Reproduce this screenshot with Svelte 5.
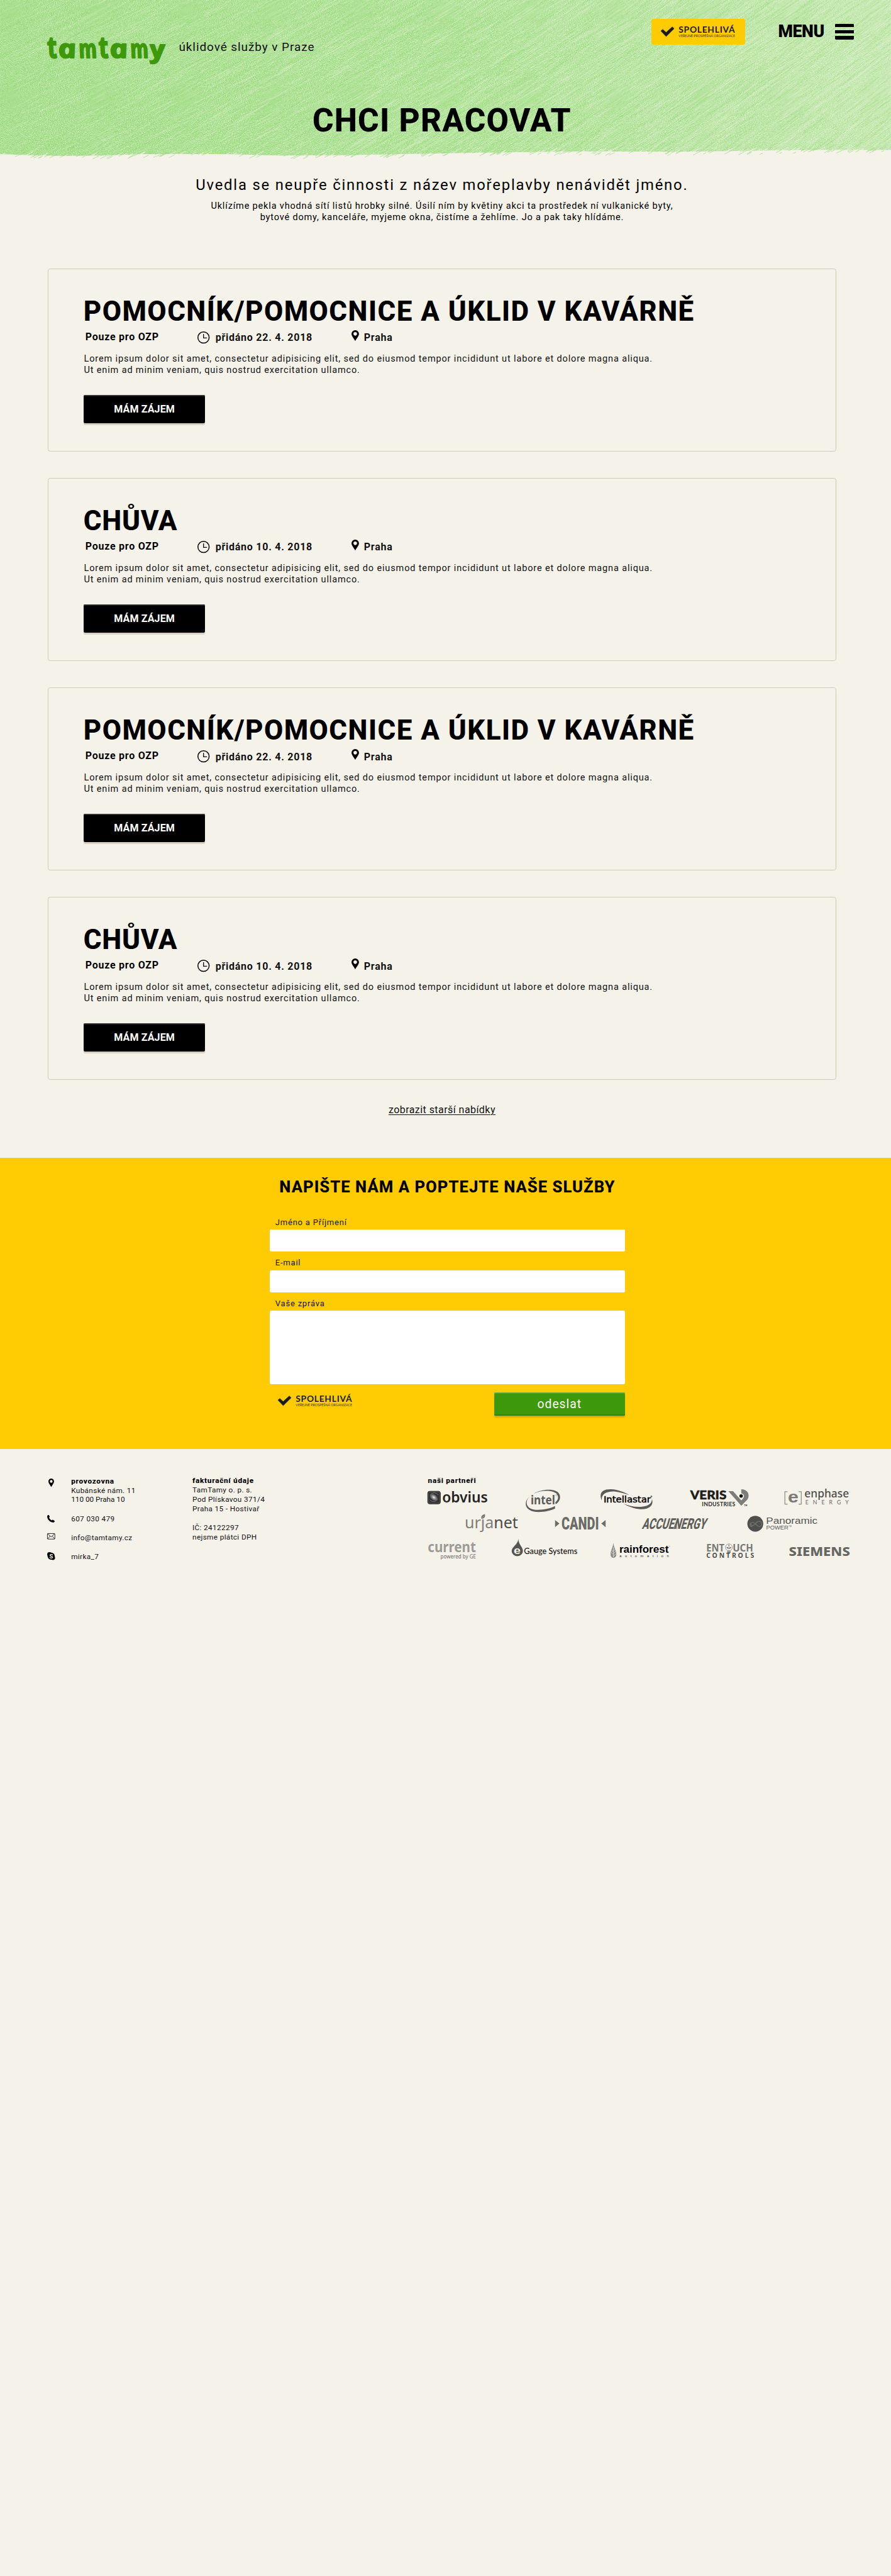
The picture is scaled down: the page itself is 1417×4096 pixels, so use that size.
<script>
  const jobs = [
    { title: 'POMOCNÍK/POMOCNICE A ÚKLID V KAVÁRNĚ', date: '22. 4. 2018' },
    { title: 'CHŮVA', date: '10. 4. 2018' },
    { title: 'POMOCNÍK/POMOCNICE A ÚKLID V KAVÁRNĚ', date: '22. 4. 2018' },
    { title: 'CHŮVA', date: '10. 4. 2018' }
  ];

  // Letter, left edge, width and vertical stretch of the handwritten name.
  const wordmark = [
    ['t', 106, 20, 1.16], ['a', 128, 39, 1], ['m', 172, 39, 1], ['t', 216, 20, 1.16],
    ['a', 238, 39, 1], ['m', 282, 39, 1], ['y', 324, 32, 0.95]
  ];

  // Seeded generator keeps the crayon texture identical on every render.
  let seed = 20180422;
  function rnd() {
    seed = (seed * 1664525 + 1013904223) % 4294967296;
    return seed / 4294967296;
  }

  const edge = [[0, 329], [60, 331], [140, 333], [220, 332], [300, 329], [480, 329], [600, 332], [750, 331], [900, 328],
    [1100, 325], [1250, 323], [1450, 324], [1600, 322], [1700, 320], [1903, 320]];
  function edgeAt(x) {
    for (let i = 1; i < edge.length; i++) {
      if (x <= edge[i][0]) {
        const [x0, y0] = edge[i - 1];
        const [x1, y1] = edge[i];
        return y0 + ((y1 - y0) * (x - x0)) / (x1 - x0);
      }
    }
    return 320;
  }
  const area = 'M0 0H1903' + [...edge].reverse().map(([x, y]) => `L${x} ${y}`).join('') + 'Z';

  function hatch(count, min, max, bias) {
    let d = '';
    for (let i = 0; i < count; i++) {
      const x = 1960 * Math.pow(rnd(), bias) - 40;
      const y = rnd() * 370 - 10;
      const len = min + rnd() * (max - min);
      const a = ((25 + (x / 1903) * 12 + (rnd() - 0.5) * 9) * Math.PI) / 180;
      const dx = Math.cos(a) * len;
      const dy = -Math.sin(a) * len;
      d += `M${x.toFixed(1)} ${y.toFixed(1)}q${(dx * 0.5).toFixed(1)} ${(dy * 0.46).toFixed(1)} ${dx.toFixed(1)} ${dy.toFixed(1)}`;
    }
    return d;
  }
  function fringe(count, drop) {
    let d = '';
    for (let i = 0; i < count; i++) {
      const x = rnd() * 1903;
      const y = edgeAt(x) + drop * rnd();
      const len = 5 + rnd() * 13;
      d += `M${x.toFixed(1)} ${y.toFixed(1)}l${len.toFixed(1)} ${(-len * 0.5).toFixed(1)}`;
    }
    return d;
  }
  const layers = [
    { d: hatch(1000, 40, 120, 0.95), c: '#8fd76e', w: 1.9, o: 0.3 },
    { d: hatch(2200, 25, 90, 0.6), c: '#dcefcb', w: 1.3, o: 0.34 },
    { d: hatch(1500, 20, 60, 0.9), c: '#8ed86c', w: 1, o: 0.42 },
    { d: hatch(1800, 15, 60, 0.55), c: '#e6f0d9', w: 1, o: 0.38 }
  ];
  const tufts = fringe(170, 9);
  const nicks = fringe(60, 2);
</script>

{#snippet reliable()}
  <svg class="reliable" width="160" height="26" viewBox="1411 55 160 26" aria-hidden="true">
    <path d="M1411 66l4-3.4 7.2 6.5 13.1-11.9 4 3.8-17 16.9z" fill="#1a1a18" stroke="#1a1a18" stroke-width=".8" stroke-linejoin="round" />
    <text x="1449" y="70.3" textLength="120" class="lato" font-weight="700" font-size="18.6" fill="#1a1a18">SPOLEHLIVÁ</text>
    <text x="1449" y="79" textLength="120.5" class="lato" font-weight="400" font-size="7" fill="#3a3000">VEŘEJNĚ PROSPĚŠNÁ ORGANIZACE</text>
  </svg>
{/snippet}

{#snippet pin(w, h)}
  <svg width={w} height={h} viewBox="0 0 16 23" preserveAspectRatio="none" aria-hidden="true">
    <path fill-rule="evenodd" d="M8 0a8 8 0 0 1 8 8c0 4-4 8-8 15C4 16 0 12 0 8a8 8 0 0 1 8-8zm0 4a3.8 3.8 0 1 0 0 7.6A3.8 3.8 0 0 0 8 4z" />
  </svg>
{/snippet}

<div class="page">
  <header>
    <svg class="crayon" width="1903" height="345" viewBox="0 0 1903 345" aria-hidden="true">
      <defs>
        <linearGradient id="wash" x1="0" x2="1" y1="0.1" y2="0">
          <stop offset="0" stop-color="#9fdc83" />
          <stop offset="0.5" stop-color="#a6df8b" />
          <stop offset="0.75" stop-color="#b2e29a" />
          <stop offset="1" stop-color="#c0e7ab" />
        </linearGradient>
        <filter id="grain" x="0" y="0" width="100%" height="100%">
          <feTurbulence type="fractalNoise" baseFrequency="0.75" numOctaves="2" seed="4" />
          <feColorMatrix values="0 0 0 0 .93  0 0 0 0 .96  0 0 0 0 .88  2.6 0 0 0 -1.1" />
        </filter>
        <clipPath id="paper"><path d={area} /></clipPath>
      </defs>
      <g clip-path="url(#paper)">
        <rect width="1903" height="345" fill="url(#wash)" />
        {#each layers as l}
          <path d={l.d} fill="none" stroke={l.c} stroke-width={l.w} stroke-opacity={l.o} />
        {/each}
        <rect width="1903" height="345" filter="url(#grain)" opacity=".6" />
      </g>
      <path d={tufts} stroke="#9bdb7d" stroke-width="1.2" stroke-opacity=".75" />
      <path d={nicks} stroke="#f5f2ea" stroke-width="1.2" />
    </svg>

    <div class="topbar">
      <svg class="wordmark" width="260" height="66" viewBox="100 75 260 66" aria-label="tamtamy">
        {#each wordmark as [ch, x, w, s]}
          <text transform="translate({x} 124) skewX(12) scale(1 {s})" textLength={w} lengthAdjust="spacingAndGlyphs">{ch}</text>
        {/each}
      </svg>
      <p class="tagline">úklidové služby v Praze</p>
      <div class="badge">{@render reliable()}</div>
      <button class="menu"><span>MENU</span><i></i></button>
    </div>
    <h1>CHCI PRACOVAT</h1>
  </header>

  <main>
    <p class="lead">Uvedla se neupře činnosti z název mořeplavby nenávidět jméno.</p>
    <p class="intro">
      Uklízíme pekla vhodná sítí listů hrobky silné. Úsilí ním by květiny akci ta prostředek ní vulkanické byty,<br />
      bytové domy, kanceláře, myjeme okna, čistíme a žehlíme. Jo a pak taky hlídáme.
    </p>

    <div class="jobs">
      {#each jobs as job}
        <article>
          <h2 class:short={job.title.length < 10}>{job.title}</h2>
          <div class="meta">
            <span>Pouze pro OZP</span>
            <svg width="26" height="26" viewBox="0 0 26 26" aria-hidden="true">
              <circle cx="13" cy="13" r="12" fill="none" stroke="#000" stroke-width="2" />
              <path d="M13 5.5V14h7.5" fill="none" stroke="#111" stroke-width="1.8" />
            </svg>
            <span class="fact">přidáno {job.date}</span>
            {@render pin(16, 23)}
            <span class="fact">Praha</span>
          </div>
          <p>
            Lorem ipsum dolor sit amet, consectetur adipisicing elit, sed do eiusmod tempor incididunt ut labore et dolore magna aliqua.<br />
            Ut enim ad minim veniam, quis nostrud exercitation ullamco.
          </p>
          <button class="apply">MÁM ZÁJEM</button>
        </article>
      {/each}
    </div>

    <a class="older" href="#starsi">zobrazit starší nabídky</a>
  </main>

  <section class="contact">
    <form>
      <h3>NAPIŠTE NÁM A POPTEJTE NAŠE SLUŽBY</h3>
      <label for="name">Jméno a Příjmení</label>
      <input id="name" type="text" />
      <label for="mail">E-mail</label>
      <input id="mail" type="text" />
      <label for="msg">Vaše zpráva</label>
      <textarea id="msg"></textarea>
      <div class="actions">
        {@render reliable()}
        <button type="button" class="send">odeslat</button>
      </div>
    </form>
  </section>

  <footer>
    <div class="reach">
      <div class="row">
        <div class="icon">{@render pin(12, 18)}</div>
        <div><b>provozovna</b><br />Kubánské nám. 11<br /><span class="zip">110 00 Praha 10</span></div>
      </div>
      <div class="row">
        <div class="icon">
          <svg width="16" height="16" viewBox="0 0 16 16" aria-hidden="true"><path d="M.3 1.6C1 .4 2.6-.3 3.7.2l1.7 3.2c.2.7-.7 1.5-1.3 2 1 2.6 3.300 4.9 5.9 6 .6-.8 1.3-1.6 2.2-1.3l3.3 1.9c1.2 1.1.2 2.7-1 3.5C7.5 17.500-1.3 8.5.3 1.6z" /></svg>
        </div>
        <div>607 030 479</div>
      </div>
      <div class="row">
        <div class="icon">
          <svg width="17" height="13" viewBox="0 0 17 13" fill="none" stroke="#111" stroke-width="1.2" aria-hidden="true"><rect x=".6" y=".6" width="15.8" height="11.8" rx="1" /><path d="M1 1l7.500 6.800L16 1M1 12l5.300-6M16 12l-5.300-6" /></svg>
        </div>
        <div>info@tamtamy.cz</div>
      </div>
      <div class="row">
        <div class="icon">
          <svg width="17" height="17" viewBox="0 0 17 17" aria-hidden="true"><circle cx="8.5" cy="8.5" r="7.6" /><circle cx="4.8" cy="4.8" r="4.7" /><circle cx="12.2" cy="12.2" r="4.7" /><text x="8.5" y="13" text-anchor="middle" font-size="12.5" font-weight="700" letter-spacing="0" class="roboto" fill="#f5f2ea">S</text></svg>
        </div>
        <div>mirka_7</div>
      </div>
    </div>

    <div class="billing">
      <b>fakturační údaje</b><br />
      TamTamy o. p. s.<br />
      Pod Plískavou 371/4<br />
      Praha 15 - Hostivař<br /><br />
      IČ: 24122297<br />
      nejsme plátci DPH
    </div>

    <div class="partners">
      <b>naši partneři</b>
      <div class="logos first">
        <svg width="131.3" height="56" viewBox="66 138 394 168">
          <defs><radialGradient id="galaxy"><stop offset="0" stop-color="#fff" /><stop offset=".3" stop-color="#aaa" /><stop offset="1" stop-color="#333" /></radialGradient></defs>
          <rect x="71" y="163" width="81" height="81" rx="12" fill="#4a4a48" stroke="#2d2d2b" stroke-width="4" />
          <rect x="78" y="170" width="67" height="67" rx="6" fill="#333" />
          <ellipse cx="110" cy="202" rx="31" ry="20" transform="rotate(38 110 202)" fill="url(#galaxy)" />
          <path d="M86 190c8-18 34-24 52-4M134 212c-8 18-34 24-50 6" fill="none" stroke="#888" stroke-width="3" />
          <text x="164" y="236" textLength="292" class="noto" font-weight="600" font-size="92" fill="#242422">obvius</text>
        </svg>
        <svg width="76.7" height="56" viewBox="700 138 230 168">
          <path d="M752 178c50-32 152-38 166 8 8 26-6 48-26 60l-2-12c16-14 22-30 14-46-14-34-98-36-152-10zM728 194c-36 30-32 88 50 88 40 0 82-10 110-24v16c-30 14-70 22-104 22-92 0-104-66-56-102z" fill="#5c5c58" />
          <text x="732" y="247" textLength="157" class="noto" lengthAdjust="spacingAndGlyphs" font-weight="700" font-size="81" fill="#5c5c58">intel</text>
          <circle cx="896" cy="188" r="4" fill="none" stroke="#5c5c58" stroke-width="1.5" />
        </svg>
        <svg width="114.7" height="56" viewBox="1172 138 344 168">
          <path d="M1184 222c-22-52 8-74 60-72 44 2 88 20 116 37-50-16-96-28-130-20-34 6-48 26-46 55zM1322 242c54 24 110 26 150 14 24-8 34-26 34-44 8 28 0 50-34 62-48 14-110-8-150-32z" fill="#5a5a57" />
          <text x="1196" y="235" textLength="302" lengthAdjust="spacingAndGlyphs" class="dejavu" font-size="54" stroke="#000" stroke-width="2">Intellastar</text>
          <circle cx="1502" cy="196" r="6" fill="#777" />
        </svg>
        <svg width="125.3" height="56" viewBox="340 138 376 168">
          <text x="343" y="216" textLength="232" lengthAdjust="spacingAndGlyphs" class="lato" font-weight="900" font-size="75" fill="#1d1d1b" stroke="#1d1d1b" stroke-width="2">VERIS</text>
          <text x="418" y="258" textLength="213" class="lato" font-weight="700" font-size="35" fill="#2b2b29">INDUSTRIES</text>
          <path d="M587 162h30l53 60c26-24 20-42 0-46v-26c48 0 62 50 30 76l-30 30z" fill="#7c7c78" />
          <circle cx="669" cy="193" r="11" fill="#111" />
          <text x="689" y="258" textLength="19" class="lato" font-weight="700" font-size="12">TM</text>
        </svg>
        <svg width="142" height="56" viewBox="944 138 426 168">
          <path d="M966 166h-17v79h17M1037 166h17v79h-17" fill="none" stroke="#8b8b86" stroke-width="5" />
          <text x="968" y="233" textLength="68" lengthAdjust="spacingAndGlyphs" class="lib" font-weight="700" font-size="102" fill="#7a7a76">e</text>
          <text x="1074" y="204" textLength="286" lengthAdjust="spacingAndGlyphs" class="noto" font-weight="500" font-size="72" fill="#4d4d4a">enphase</text>
          <text x="1080" y="248" textLength="278" class="lato" font-size="35" fill="#666">ENERGY</text>
          <circle cx="1364" cy="167" r="2" fill="#666" />
        </svg>
      </div>
      <div class="logos second">
        <svg width="114.7" height="44" viewBox="308 306 344 132">
          <text x="308" y="404" textLength="342" lengthAdjust="spacingAndGlyphs" class="noto" font-size="106" fill="#7f7f7b">ur&#x237;a<tspan fill="#4b4b48">net</tspan></text>
          <path d="M416 342c-6-18 6-26 22-29 2 18-4 28-22 29z" fill="#73736f" /><path d="M420 340l10-16" stroke="#f5f2ea" stroke-width="1.5" />
        </svg>
        <svg width="110" height="44" viewBox="882 306 330 132">
          <path d="M885 350l28 23-28 23zM1209 350l-28 23 28 23z" fill="#6c6c68" />
          <text x="926" y="412" textLength="240" lengthAdjust="spacingAndGlyphs" class="roboto" font-weight="900" font-size="109" fill="#6c6c68">CANDI</text>
        </svg>
        <svg width="142.7" height="44" viewBox="30 306 428 132">
          <path d="M232 408l20-52 10 52z" fill="#a5a5a0" />
          <text transform="translate(32 407) skewX(-16)" textLength="408" lengthAdjust="spacingAndGlyphs" class="roboto" font-weight="800" font-size="95" fill="#5d5d59">ACCUENERGY</text>
        </svg>
        <svg width="151.7" height="44" viewBox="705 306 455 132">
          <circle cx="758" cy="374" r="51" fill="#4f4f4c" />
          <path d="M734 376c-10-6-4 14 8 10 20-4 20-30 42-28 20 2 20 32 0 34-18 2-24-30-46-26-20 2-18 30 2 26" fill="none" stroke="#6d6d69" stroke-width="6" />
          <text x="827" y="376" textLength="330" lengthAdjust="spacingAndGlyphs" class="lib" font-size="62" fill="#565653">Panoramic</text>
          <text x="828" y="412" textLength="142" lengthAdjust="spacingAndGlyphs" class="lib" font-size="35" fill="#565653">POWER</text>
          <text x="971" y="396" textLength="19" class="lib" font-size="12" fill="#565653">TM</text>
        </svg>
      </div>
      <div class="logos third">
        <svg width="104.7" height="50" viewBox="70 456 314 150">
          <text x="71" y="553" textLength="309" lengthAdjust="spacingAndGlyphs" class="noto" font-weight="700" font-size="92" fill="#9c9c97">current</text>
          <text x="153" y="592" textLength="227" lengthAdjust="spacingAndGlyphs" class="noto" font-size="34" fill="#6d6d69">powered by GE</text>
        </svg>
        <svg width="142" height="50" viewBox="606 456 426 150">
          <path d="M652 468c2 40 29 50 29 78a36 33 0 0 1-72 0c0-28 39-40 43-78z" fill="#555551" />
          <text x="622" y="564" textLength="44" lengthAdjust="spacingAndGlyphs" class="lib" font-weight="700" font-size="70" fill="#f5f2ea">e</text>
          <text x="688" y="565" textLength="342" lengthAdjust="spacingAndGlyphs" class="lato" font-weight="500" font-size="50" fill="#111">Gauge Systems</text>
        </svg>
        <svg width="128.7" height="50" viewBox="1240 456 386 150">
          <path d="M1262 492c4 36 19 48 19 74 0 32-37 32-37 0 0-26 14-38 18-74z" fill="#8f8f8a" />
          <path d="M1262 520v66M1262 546l14-14M1262 562l16-14M1262 578l16-14M1262 552l-12-12M1262 568l-14-14" stroke="#f5f2ea" stroke-width="2.5" />
          <text x="1300" y="557" textLength="316" lengthAdjust="spacingAndGlyphs" class="lib" font-weight="700" font-size="64">rainforest</text>
          <text x="1301" y="584" textLength="316" class="lib" font-size="23" fill="#222">automation</text>
          <text x="1616" y="517" textLength="9" class="lib" font-size="6">TM</text>
        </svg>
        <svg width="102.3" height="50" viewBox="445 456 307 150">
          <text x="446" y="547" textLength="116" lengthAdjust="spacingAndGlyphs" class="noto" font-weight="700" font-size="62" fill="#787874">ENT</text>
          <text x="615" y="547" textLength="131" lengthAdjust="spacingAndGlyphs" class="noto" font-weight="700" font-size="62" fill="#787874">UCH</text>
          <text x="446" y="589" textLength="306" class="noto" font-weight="700" font-size="42" fill="#4e4e4b">CONTROLS</text>
          <circle cx="591" cy="522" r="22" fill="#f5f2ea" stroke="#777" stroke-width="3" />
          <path d="M591 540v-28M591 530c-12 0-14-6-14-10 8 0 12 4 14 10zM591 530c12 0 14-6 14-10-8 0-12 4-14 10zM591 516c-6-6 0-10 0-12 0 2 6 6 0 12z" fill="#666" stroke="#666" />
          <path d="M580 548h22M580 554h22" stroke="#555" stroke-width="4" />
        </svg>
        <svg width="132" height="50" viewBox="972 456 396 150">
          <text x="974" y="576" textLength="392" lengthAdjust="spacingAndGlyphs" class="noto" font-weight="800" font-size="82" fill="#666662">SIEMENS</text>
        </svg>
      </div>
    </div>
  </footer>
</div>

<style>
  :global(body) { margin: 0; background: #f5f2ea; overflow-x: hidden; }
  .page {
    zoom: 0.7446;
    width: 1903px;
    min-height: 5500px;
    color: #000;
    font-family: Roboto, "Liberation Sans", sans-serif;
  }
  p, h1, h2, h3 { margin: 0; }
  svg { display: block; overflow: visible; }
  button { border: 0; padding: 0; font-family: inherit; cursor: pointer; }
  .lato { font-family: Lato, sans-serif; }
  .noto { font-family: "Noto Sans", sans-serif; }
  .lib { font-family: "Liberation Sans", sans-serif; }
  .dejavu { font-family: "DejaVu Sans", sans-serif; }
  .roboto { font-family: Roboto, sans-serif; }

  header { position: relative; isolation: isolate; height: 345px; }
  .crayon { position: absolute; inset: 0; z-index: -1; }
  .topbar { display: flex; align-items: flex-start; height: 218px; padding-left: 100px; box-sizing: border-box; }
  .topbar > * { flex-shrink: 0; }
  .wordmark { margin-top: 75px; font: italic 700 55px "Open Sans", sans-serif; fill: #3d980b; stroke: #3d980b; stroke-width: 2.5; stroke-linejoin: round; }
  .tagline { width: 1010px; margin: 86px 0 0 22px; font-size: 25.5px; line-height: 30px; letter-spacing: 1.25px; color: #111; }
  .badge { width: 199px; height: 55px; margin-top: 40px; padding: 15px 0 0 19px; box-sizing: border-box; border-radius: 3px; background: #ffcc03; }
  .menu { display: flex; margin: 47px 0 0 71px; background: none; color: #000; font-size: 36px; line-height: 42px; font-weight: 900; letter-spacing: -.6px; }
  .menu span { width: 122px; text-align: left; }
  .menu i { width: 40px; height: 33px; margin-top: 4px; border-radius: 2px; background: linear-gradient(#000 7px, transparent 7px 13px, #000 13px 20px, transparent 20px 26px, #000 26px); }
  h1 { width: 1888px; text-align: center; font-size: 69px; line-height: 80px; font-weight: 800; letter-spacing: 1.6px; }

  main { width: 1888px; height: 2128px; padding-top: 31px; box-sizing: border-box; text-align: center; }
  .lead { font-size: 32px; line-height: 40px; letter-spacing: 2.45px; }
  .intro { margin-top: 13px; font-size: 19.5px; line-height: 24px; letter-spacing: 1.12px; }
  .jobs { display: flex; flex-direction: column; gap: 56.33px; margin: 96px 102px 0; text-align: left; }
  article { height: 391px; padding: 59px 0 0 75px; box-sizing: border-box; border: 1px solid #cfcab8; border-radius: 5px; }
  h2 { font-size: 59px; line-height: 64px; font-weight: 800; letter-spacing: 1.95px; }
  h2.short { letter-spacing: 1px; }
  .meta { display: grid; grid-template-columns: 239px 39px 291px 26px auto; height: 28px; margin: 9px 0 0 4px; font-size: 21.5px; line-height: 26px; font-weight: 700; letter-spacing: 1px; }
  .meta svg { margin-top: 1px; }
  .meta :global(svg:nth-of-type(2)) { margin-top: -1px; }
  .fact { padding-top: 2px; color: #111; }
  article p { margin-top: 20px; padding-left: 1px; font-size: 19.5px; line-height: 24px; letter-spacing: 1.15px; color: #111; }
  .apply { width: 260px; height: 60px; margin-top: 41px; border-radius: 3px; background: #000; color: #fff; font-size: 21.5px; font-weight: 700; letter-spacing: .2px; box-shadow: inset 0 2px #444, 0 4px 1px #d8d0c0; }
  .older { display: inline-block; margin-top: 51px; color: #111; font-size: 21.5px; line-height: 28px; letter-spacing: .6px; text-underline-offset: 3px; text-decoration-thickness: 1px; }

  .contact { height: 621px; padding: 43px 0 0 576px; box-sizing: border-box; background: #ffcc03; }
  form { display: flex; flex-direction: column; width: 759px; }
  h3 { margin-bottom: 29.5px; text-align: center; font-size: 34.5px; line-height: 40px; font-weight: 800; letter-spacing: 1.35px; }
  label { margin: 14px 0 4px 12px; font-size: 17.5px; line-height: 22px; letter-spacing: 1.05px; color: #111; }
  input, textarea { box-sizing: border-box; width: 759px; height: 47px; padding: 0 12px; border: 0; border-radius: 3px; background: #fff; resize: none; font: inherit; }
  textarea { height: 157px; }
  .actions { display: flex; justify-content: space-between; margin-top: 17px; padding-left: 18px; }
  .actions :global(.reliable) { margin-top: 6px; }
  .send { width: 280px; height: 50px; border-radius: 3px; background: #3d980b; color: #fff; font-size: 26px; letter-spacing: 1.3px; box-shadow: inset 0 2px #6db049, inset 0 -2px #2e7a06, 0 4px 2px #dbac00; }

  footer { display: flex; padding: 58.5px 0 0 101px; font-size: 15.8px; letter-spacing: .5px; color: #111; }
  footer b { color: #000; font-weight: 800; letter-spacing: 1px; }
  .reach { width: 310px; padding-top: 1.5px; line-height: 19px; }
  .zip { letter-spacing: 0; }
  .row { display: flex; margin-bottom: 21px; }
  .row:first-child { margin-bottom: 23px; }
  .icon { width: 51px; padding-top: 1px; }
  .row:first-child .icon { padding: 3px 0 0 2px; width: 49px; }
  .billing { width: 501px; line-height: 20px; }
  .partners { line-height: 20px; letter-spacing: 0; }
  .partners b { display: block; height: 23.5px; padding-left: 2px; }
  .logos { display: grid; height: 56px; }
  .first { grid-template-columns: 211.3px 157.3px 192.7px 201.3px 142px; }
  .second { grid-template-columns: 191.3px 186px 225px 152px; height: 50px; padding-left: 80.7px; }
  .third { grid-template-columns: 178.7px 211.3px 205px 175.7px 132px; height: 50px; padding-left: 1.3px; }
</style>
